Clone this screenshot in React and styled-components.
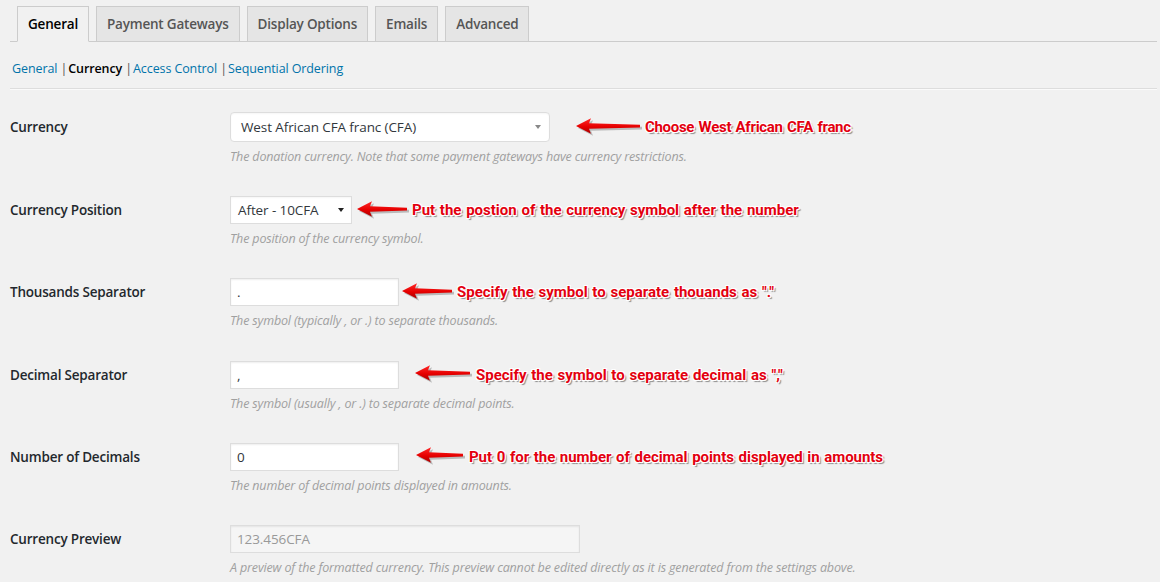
import React from "react";
import styled, { createGlobalStyle } from "styled-components";

const Global = createGlobalStyle`
  html, body { margin: 0; padding: 0; background: #f1f1f1; }
  body { font-family: "Open Sans", "Noto Sans", sans-serif; color: #23282d; }
`;

const Page = styled.div`
  width: 1160px;
  height: 582px;
  overflow: hidden;
  padding: 0 3px 0 10px;
  box-sizing: border-box;
`;

const TabBar = styled.nav`
  display: flex;
  align-items: flex-end;
  gap: 7px;
  padding: 6px 0 0 7px;
  border-bottom: 1px solid #ccc;
  height: 42px;
  box-sizing: border-box;
`;

const Tab = styled.a`
  display: block;
  padding: 0 10px;
  height: 36px;
  line-height: 34px;
  box-sizing: border-box;
  margin-bottom: -1px;
  border: 1px solid #ccc;
  border-bottom-color: ${(p) => (p.$active ? "#f1f1f1" : "#ccc")};
  background: ${(p) => (p.$active ? "#f1f1f1" : "#e5e5e5")};
  color: ${(p) => (p.$active ? "#000" : "#555")};
  font-size: 13.5px;
  font-weight: 600;
  letter-spacing: -0.2px;
  text-decoration: none;
  white-space: nowrap;
`;

const SubNav = styled.ul`
  display: flex;
  gap: 1px;
  list-style: none;
  margin: 0;
  padding: 17px 0 0 2px;
  height: 46px;
  box-sizing: border-box;
  font-size: 12.5px;
  line-height: 20px;
  letter-spacing: -0.1px;
`;

const SubItem = styled.li`
  color: #555;
  white-space: pre;
`;

const SubLink = styled.a`
  color: ${(p) => (p.$current ? "#000" : "#0073aa")};
  font-weight: ${(p) => (p.$current ? 600 : 400)};
  text-decoration: none;
`;

const Rule = styled.hr`
  margin: 0;
  border: 0;
  border-top: 1px solid #ddd;
  border-bottom: 1px solid #fafafa;
`;

const Form = styled.div`
  padding-top: 7px;
`;

const Row = styled.div`
  display: grid;
  grid-template-columns: 220px 1fr;
  grid-template-rows: auto auto;
  padding: 15px 0 15.2px;
  box-sizing: border-box;
`;

const Label = styled.label`
  display: flex;
  align-items: center;
  font-size: 13.5px;
  font-weight: 600;
  letter-spacing: -0.2px;
  color: #23282d;
`;

const FieldLine = styled.div`
  display: flex;
  align-items: center;
`;

const Description = styled.p`
  grid-column: 2;
  margin: 6px 0 0 0;
  font-size: 12.5px;
  line-height: 18px;
  font-style: italic;
  color: #a0a0a0;
  letter-spacing: -0.15px;
`;

const SelectBox = styled.div`
  position: relative;
  width: ${(p) => p.$w}px;
  height: ${(p) => p.$h}px;
  box-sizing: border-box;
  background: #fff;
  border: 1px solid #ddd;
  border-radius: ${(p) => p.$r}px;
  padding: 0 0 0 ${(p) => p.$pl}px;
  font-size: 13.5px;
  line-height: ${(p) => p.$h - 2}px;
  color: #32373c;
  letter-spacing: -0.1px;
  box-shadow: inset 0 1px 2px rgba(0, 0, 0, 0.04);
`;

const Caret = styled.span`
  position: absolute;
  right: ${(p) => p.$right}px;
  top: 50%;
  transform: translateY(-50%);
  width: 0;
  height: 0;
  border-left: ${(p) => p.$s}px solid transparent;
  border-right: ${(p) => p.$s}px solid transparent;
  border-top: ${(p) => p.$s + 1}px solid ${(p) => p.$color};
`;

const TextInput = styled.div`
  width: ${(p) => p.$w}px;
  height: 28px;
  box-sizing: border-box;
  background: ${(p) => (p.$disabled ? "#f5f5f5" : "#fff")};
  border: 1px solid #ddd;
  box-shadow: inset 0 1px 2px rgba(0, 0, 0, 0.07);
  padding: 0 6px;
  font-size: 13.5px;
  line-height: 26px;
  color: ${(p) => (p.$disabled ? "#999" : "#32373c")};
  letter-spacing: -0.1px;
`;

const Note = styled.div`
  display: flex;
  align-items: center;
  margin-left: ${(p) => p.$gap}px;
`;

const NoteText = styled.span`
  margin-left: ${(p) => p.$gap}px;
  font-family: "Liberation Sans Narrow", "Roboto", "Liberation Sans", sans-serif;
  font-weight: 700;
  font-size: 15px;
  letter-spacing: ${(p) => p.$ls}px;
  word-spacing: 1px;
  color: #e3000f;
  white-space: nowrap;
  text-shadow: -1px -1px 0 #fff, 1px -1px 0 #fff, -1px 1px 0 #fff,
    1px 1px 0 #fff, 2px 2px 1px #8a8a8a;
`;

function Arrow({ w }) {
  const h = 18;
  const d = `M1 9 L16 1.2 L14 6.3 L${w} 7.7 L${w} 10.5 L14 11.7 L16 16.8 Z`;
  return (
    <svg width={w + 3} height={h + 3} viewBox={`0 0 ${w + 3} ${h + 3}`}>
      <defs>
        <linearGradient id={`ag${w}`} x1="0" y1="0" x2="0" y2="1">
          <stop offset="0" stopColor="#ff2a2a" />
          <stop offset="0.55" stopColor="#e60000" />
          <stop offset="1" stopColor="#a80000" />
        </linearGradient>
      </defs>
      <path d={d} fill="#8c8c8c" opacity="0.55" transform="translate(2 2)" />
      <path d={d} fill={`url(#ag${w})`} />
    </svg>
  );
}

function Annotation({ gap, arrow, textGap, ls = 0, children }) {
  return (
    <Note $gap={gap}>
      <Arrow w={arrow} />
      <NoteText $gap={textGap} $ls={ls}>
        {children}
      </NoteText>
    </Note>
  );
}

const tabs = ["General", "Payment Gateways", "Display Options", "Emails", "Advanced"];

export default function App() {
  return (
    <>
      <Global />
      <Page>
        <TabBar>
          {tabs.map((t, i) => (
            <Tab key={t} $active={i === 0}>
              {t}
            </Tab>
          ))}
        </TabBar>
        <SubNav>
          <SubItem>
            <SubLink>General</SubLink>{" |"}
          </SubItem>
          <SubItem>
            <SubLink $current>Currency</SubLink>{" |"}
          </SubItem>
          <SubItem>
            <SubLink>Access Control</SubLink>{" |"}
          </SubItem>
          <SubItem>
            <SubLink>Sequential Ordering</SubLink>
          </SubItem>
        </SubNav>
        <Rule />
        <Form>
          <Row>
            <Label>Currency</Label>
            <FieldLine>
              <SelectBox $w={320} $h={30} $r={4} $pl={10}>
                West African CFA franc (CFA)
                <Caret $right={8} $s={3} $color="#888" />
              </SelectBox>
              <Annotation gap={25} arrow={65} textGap={2} ls={-0.3}>
                Choose West African CFA franc
              </Annotation>
            </FieldLine>
            <Description>
              The donation currency. Note that some payment gateways have currency restrictions.
            </Description>
          </Row>
          <Row>
            <Label>Currency Position</Label>
            <FieldLine>
              <SelectBox $w={122} $h={28} $r={0} $pl={7}>
                After - 10CFA
                <Caret $right={7} $s={3.5} $color="#222" />
              </SelectBox>
              <Annotation gap={4} arrow={51} textGap={2}>
                Put the postion of the currency symbol after the number
              </Annotation>
            </FieldLine>
            <Description>The position of the currency symbol.</Description>
          </Row>
          <Row>
            <Label>Thousands Separator</Label>
            <FieldLine>
              <TextInput $w={169}>.</TextInput>
              <Annotation gap={2} arrow={51} textGap={2}>
                Specify the symbol to separate thouands as "."
              </Annotation>
            </FieldLine>
            <Description>The symbol (typically , or .) to separate thousands.</Description>
          </Row>
          <Row>
            <Label>Decimal Separator</Label>
            <FieldLine>
              <TextInput $w={169}>,</TextInput>
              <Annotation gap={15} arrow={56} textGap={3}>
                Specify the symbol to separate decimal as ","
              </Annotation>
            </FieldLine>
            <Description>The symbol (usually , or .) to separate decimal points.</Description>
          </Row>
          <Row>
            <Label>Number of Decimals</Label>
            <FieldLine>
              <TextInput $w={169}>0</TextInput>
              <Annotation gap={16} arrow={48} textGap={3} ls={-0.05}>
                Put 0 for the number of decimal points displayed in amounts
              </Annotation>
            </FieldLine>
            <Description>The number of decimal points displayed in amounts.</Description>
          </Row>
          <Row>
            <Label>Currency Preview</Label>
            <FieldLine>
              <TextInput $w={350} $disabled>
                123.456CFA
              </TextInput>
            </FieldLine>
            <Description>
              A preview of the formatted currency. This preview cannot be edited directly as it is generated from the settings above.
            </Description>
          </Row>
        </Form>
      </Page>
    </>
  );
}
